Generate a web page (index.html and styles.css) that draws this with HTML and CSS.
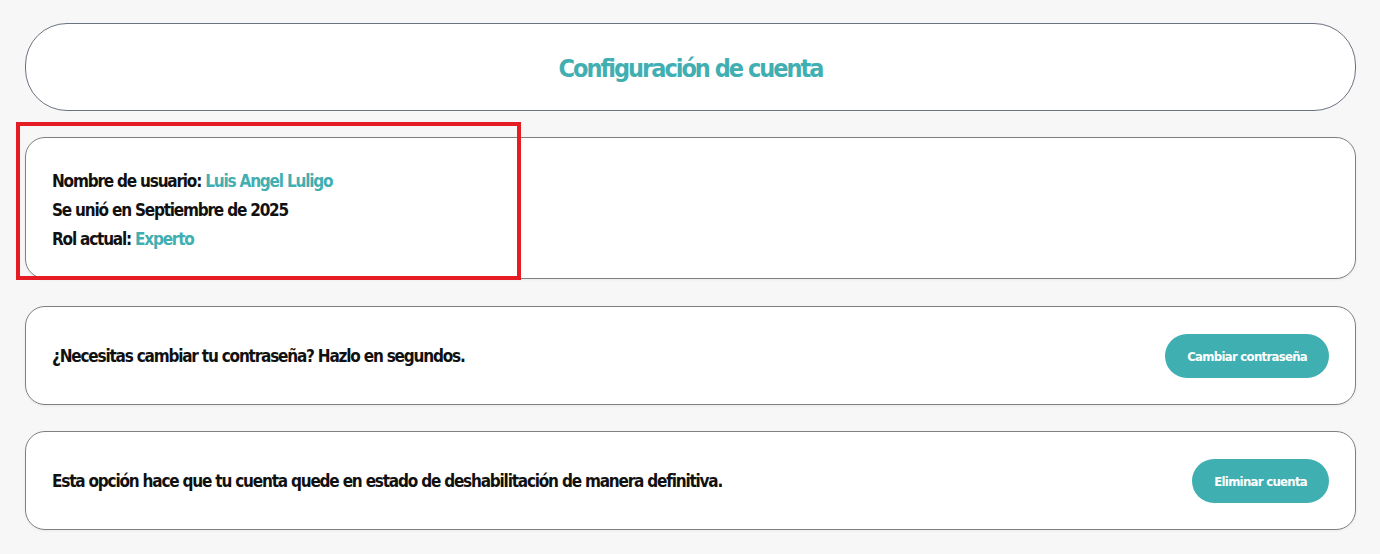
FILE: index.html
```html
<!DOCTYPE html>
<html lang="es">
<head>
<meta charset="utf-8">
<title>Configuración de cuenta</title>
<link rel="stylesheet" href="styles.css">
</head>
<body>
<main class="page">
  <header class="card title-card">
    <h1 class="title">Configuración de cuenta</h1>
  </header>
  <section class="card info-card">
    <p class="line">Nombre de usuario: <span class="accent">Luis Angel Luligo</span></p>
    <p class="line">Se unió en Septiembre de 2025</p>
    <p class="line">Rol actual: <span class="accent">Experto</span></p>
    <div class="highlight"></div>
  </section>
  <section class="card action-card">
    <p class="line">¿Necesitas cambiar tu contraseña? Hazlo en segundos.</p>
    <button class="btn">Cambiar contraseña</button>
  </section>
  <section class="card action-card">
    <p class="line">Esta opción hace que tu cuenta quede en estado de deshabilitación de manera definitiva.</p>
    <button class="btn">Eliminar cuenta</button>
  </section>
</main>
</body>
</html>
```
FILE: styles.css
```css
* { box-sizing: border-box; }
html, body { margin: 0; padding: 0; }
body {
  background: #f7f7f7;
  font-family: "DejaVu Sans", "Liberation Sans", sans-serif;
  font-stretch: semi-condensed;
  color: #111;
}
.page {
  display: flex;
  flex-direction: column;
  gap: 26px;
  padding: 23px 24px 23px 25px;
}
.card {
  background: #fff;
  border: 1px solid #808080;
  border-radius: 20px;
  position: relative;
  box-shadow: 0 1px 3px rgba(0, 0, 0, 0.06);
}
.title-card {
  border-color: #6b7280;
  border-radius: 42px;
  height: 88px;
  display: flex;
  align-items: center;
  justify-content: center;
  box-shadow: none;
}
.title {
  margin: 3px 0 0;
  font-size: 25px;
  font-weight: 700;
  letter-spacing: -2px;
  color: #41afb2;
}
.info-card {
  padding: 29px 26px 24px;
  margin-bottom: 1px;
}
.line {
  margin: 0;
  font-size: 17px;
  font-weight: 700;
  line-height: 29px;
  letter-spacing: -1.2px;
}
.accent { color: #41afb2; }
.action-card {
  display: flex;
  align-items: center;
  justify-content: space-between;
  padding: 27px 26px 26px;
}
.btn {
  height: 44px;
  padding: 0 22px;
  border: none;
  border-radius: 22px;
  background: #3fafb1;
  color: #fff;
  font-family: inherit;
  font-stretch: semi-condensed;
  font-size: 13px;
  font-weight: 700;
  letter-spacing: -0.7px;
}
.highlight {
  position: absolute;
  left: -10px;
  top: -16px;
  width: 505px;
  height: 158px;
  border: 4px solid #e51c23;
  pointer-events: none;
}
```
